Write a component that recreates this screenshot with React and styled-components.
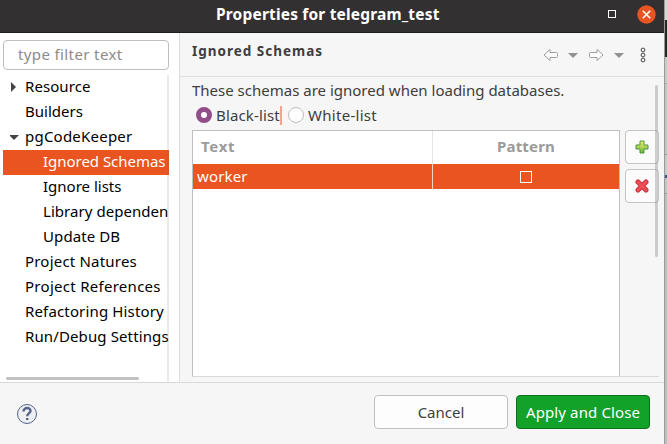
import React from "react";
import styled, { createGlobalStyle, css } from "styled-components";

const Global = createGlobalStyle`
  * { box-sizing: border-box; }
  body { margin: 0; overflow: hidden; background: #c9c9c9; font: 15px/25px "Noto Sans", "Open Sans", sans-serif; }
  button, input { font: inherit; margin: 0; padding: 0; }
`;
const Screen = styled.div`
  width: 667px; height: 444px; display: flex; overflow: hidden;
`;
const Dialog = styled.section`
  width: 664px; height: 444px; flex: none; display: flex; flex-direction: column;
  background: #f6f6f6; color: #3d3d3d;
`;
const Fit = styled.span`
  white-space: pre; letter-spacing: ${(p) => p.$ls || 0}px;
`;
const TitleBar = styled.header`
  height: 33px; flex: none; background: #323030; border-bottom: 1px solid #1d1d1d; color: #fff;
  display: flex; align-items: center; padding: 0 8px 4px 216px; font-weight: 700; font-size: 15.5px;
`;
const WindowButtons = styled.div`
  margin-left: auto; display: flex; align-items: center; gap: 21px;
`;
const Body = styled.div`
  height: 350px; flex: none; display: flex; border-bottom: 1px solid #d8d8d8;
`;
const Sidebar = styled.aside`
  width: 180px; flex: none; background: #fff; border-right: 1px solid #dedede; padding: 7px 10px 0 3px;
`;
const Filter = styled.div`
  height: 30px; border: 1px solid #bdbdbd; border-radius: 4px; background: #fff; color: #8b8b8b;
  padding: 0 0 0 14px; line-height: 26px; margin-bottom: 5px;
`;
const Tree = styled.div`
  height: 307px; overflow: hidden; color: #000; position: relative;
  background: linear-gradient(#eaeaea, #eaeaea) right / 2px 100% no-repeat;
`;
const TreeRow = styled.div`
  height: 25px; line-height: 22px; display: flex; align-items: center;
  padding: 0 0 3px ${(p) => (p.$child ? 40 : 7)}px;
  ${(p) => p.$selected && css`background: linear-gradient(90deg, #e95420 164px, #dc5628 164px); color: #fff;`}
`;
const Twisty = styled.span`
  width: 15px; height: 22px; padding-top: 2px; flex: none; display: flex; align-items: center;
`;
const HScroll = styled.div`
  position: absolute; left: 3px; bottom: 2px; width: 133px; height: 3px; border-radius: 2px; background: #c2c2c2;
`;
const Main = styled.main`
  flex: 1; min-width: 0; display: flex; flex-direction: column;
`;
const PageHead = styled.div`
  height: 44px; flex: none; border-bottom: 1px solid #dedede; display: flex; align-items: flex-start;
  padding: 6px 18px 0 12px; font-size: 13.5px; font-weight: 700;
`;
const Tools = styled.div`
  margin-left: auto; height: 32px; display: flex; align-items: center;
`;
const Content = styled.div`
  flex: 1; padding: 1px 5px 0 12px; position: relative;
`;
const VScroll = styled.div`
  position: absolute; left: 475px; top: 8px; width: 3px; height: 172px; border-radius: 2px; background: rgba(120,120,120,.34);
`;
const Radios = styled.div`
  height: 25px; display: flex; align-items: center; padding: 0 0 1px 4px;
`;
const Radio = styled.span`
  width: 16px; height: 16px; border-radius: 50%; flex: none; margin-right: 4px;
  ${(p) => p.$on
    ? css`background: #fff; border: 5.5px solid #924d8b;`
    : css`background: #fff; border: 1px solid #bdbdbd;`}
`;
const Focus = styled.span`
  width: 2px; height: 19px; background: #f2a58c; margin: 0 6px 0 0;
`;
const Split = styled.div`
  display: flex; gap: 5px; margin-top: 2px; height: 247px; border-bottom: 1px solid #dadada;
`;
const Table = styled.div`
  width: 428px; height: 247px; background: #fff; border: 1px solid #bfbfbf; border-bottom-color: #dadada;
`;
const Row = styled.div`
  display: grid; grid-template-columns: 239px 1fr; height: ${(p) => (p.$head ? 33 : 25)}px;
  ${(p) => (p.$head ? css`color: #9b9b9b; font-weight: 700;` : css`background: #e95420; color: #fff;`)}
`;
const Cell = styled.div`
  display: flex; align-items: center; padding: 0 0 ${(p) => (p.$head ? 2 : 1)}px ${(p) => p.$pl || 0}px;
  justify-content: ${(p) => (p.$center ? "center" : "flex-start")};
  border-left: ${(p) => (p.$center ? "1px" : "0")} solid ${(p) => (p.$head ? "#e3e3e3" : "#fbd3c4")};
`;
const CheckBox = styled.span`
  width: 12px; height: 12px; border: 1px solid #fff; margin-right: 1px;
`;
const SideButtons = styled.div`
  display: flex; flex-direction: column; gap: 5px;
`;
const SquareButton = styled.button`
  width: 34px; height: 34px; border: 1px solid #c4c4c4; border-radius: 4px; background: #fbfbfb;
  display: flex; align-items: center; justify-content: center;
`;
const Footer = styled.footer`
  flex: 1; display: flex; align-items: center; padding: 0 14px 0 16px; gap: 8px;
`;
const Action = styled.button`
  width: 134px; height: 34px; margin-bottom: 4px; border-radius: 4px; line-height: 28px;
  border: 1px solid ${(p) => (p.$primary ? "#0b7019" : "#bfbfbf")};
  background: ${(p) => (p.$primary ? "#12a129" : "#fdfdfd")};
  color: ${(p) => (p.$primary ? "#fff" : "#3d3d3d")};
`;
const Label = styled(Fit)`
  line-height: 24px;
`;
const Spacer = styled.div`flex: 1;`;
const Backdrop = styled.div`
  width: 3px; border-left: 1px solid #9a9a9a;
  background: linear-gradient(#d8d8d8 0 20px, #282828 20px 57px, #c9c9c9 57px 83px, #aaa 83px 84px, #c4c4c4 84px 154px, #999 154px 155px, #c9c9c9 155px 175px, #3b5584 175px 178px, #c4c4c4 178px 193px, #999 193px 194px, #bebebe 194px);
`;

const Arrow = ({ right }) => (
  <svg width="16" height="14" viewBox="0 0 16 14" fill="#fbfbfb" stroke="#a0a0a0" strokeLinejoin="round">
    <path transform={right ? "translate(15 0) scale(-1 1)" : undefined} d="M1 7 L7 1.5 V4.5 H13.5 Q14.5 4.5 14.5 5.5 V8.5 Q14.5 9.5 13.5 9.5 H7 V12.5 Z" />
  </svg>
);
const Down = styled.i`
  border: 5px solid transparent; border-top-color: #929292; border-bottom: 0; margin: 0 ${(p) => p.$mr}px 0 9px;
`;

const rows = [
  ["Resource", 0.08, "closed"], ["Builders", 0], ["pgCodeKeeper", 0.22, "open"],
  ["Ignored Schemas", -0.03, null, true, true], ["Ignore lists", 0, null, true], ["Library dependen", 0.05, null, true],
  ["Update DB", 0.1, null, true], ["Project Natures", 0.2], ["Project References", 0.28], ["Refactoring History", 0.15], ["Run/Debug Settings", 0.12],
];

export default function App() {
  return (
    <Screen>
      <Global />
      <Dialog>
        <TitleBar>
          <Fit $ls={0.18}>Properties for telegram_test</Fit>
          <WindowButtons>
            <svg width="8" height="8"><rect x=".5" y=".5" width="7" height="7" fill="none" stroke="#fff" /></svg>
            <svg width="19" height="19"><circle cx="9.5" cy="9.5" r="9.2" fill="#e95420" /><path d="M5.8 5.8 L13.2 13.2 M13.2 5.8 L5.8 13.2" stroke="#fff" strokeWidth="1.6" /></svg>
          </WindowButtons>
        </TitleBar>
        <Body>
          <Sidebar>
            <Filter><Fit $ls={0.38}>type filter text</Fit></Filter>
            <Tree>
              {rows.map(([text, ls, mark, child, selected]) => (
                <TreeRow key={text} $child={child} $selected={selected}>
                  {!child && (
                    <Twisty>
                      {mark === "closed" && <svg width="10" height="10"><path d="M4 0 L9 5 L4 10 Z" fill="#444" transform="translate(-3 0)" /></svg>}
                      {mark === "open" && <svg width="10" height="8"><path d="M-1 2 H9 L4 7 Z" fill="#444" /></svg>}
                    </Twisty>
                  )}
                  <Fit $ls={ls}>{text}</Fit>
                </TreeRow>
              ))}
              <HScroll />
            </Tree>
          </Sidebar>
          <Main>
            <PageHead>
              <Fit $ls={1}>Ignored Schemas</Fit>
              <Tools>
                <Arrow /><Down $mr={11} /><Arrow right /><Down $mr={16} />
                <svg width="6" height="16" fill="none" stroke="#444"><circle cx="3" cy="3" r="1.9" /><circle cx="3" cy="8" r="1.9" /><circle cx="3" cy="13" r="1.9" /></svg>
              </Tools>
            </PageHead>
            <Content>
              <Fit>These schemas are ignored when loading databases.</Fit>
              <Radios>
                <Radio $on /><Label $ls={0.15}>Black-list</Label><Focus /><Radio /><Label $ls={0.3}>White-list</Label>
              </Radios>
              <Split>
                <Table>
                  <Row $head>
                    <Cell $head $pl={8}><Fit $ls={0.7}>Text</Fit></Cell>
                    <Cell $head $center><Fit $ls={0.15}>Pattern</Fit></Cell>
                  </Row>
                  <Row>
                    <Cell $pl={4}><Fit $ls={0.15}>worker</Fit></Cell>
                    <Cell $center><CheckBox /></Cell>
                  </Row>
                </Table>
                <SideButtons>
                  <SquareButton aria-label="Add">
                    <svg width="14" height="14"><defs><linearGradient id="g" x2="0" y2="1"><stop stopColor="#f2ef70" /><stop offset="1" stopColor="#69b83c" /></linearGradient></defs><path d="M5 1 H9 V5 H13 V9 H9 V13 H5 V9 H1 V5 H5 Z" fill="url(#g)" stroke="#4d943f" /></svg>
                  </SquareButton>
                  <SquareButton aria-label="Remove">
                    <svg width="14" height="14"><path d="M3 3 L11 11 M11 3 L3 11" stroke="#cd2f3c" strokeWidth="5" strokeLinecap="round" /><path d="M3 3 L11 11 M11 3 L3 11" stroke="#ee5055" strokeWidth="3" strokeLinecap="round" /></svg>
                  </SquareButton>
                </SideButtons>
              </Split>
              <VScroll />
            </Content>
          </Main>
        </Body>
        <Footer>
          <svg width="22" height="22" viewBox="0 0 22 22" fill="none" stroke="#54658c"><circle cx="11" cy="11" r="9.5" fill="#eeeff1" /><path d="M7.5 8.5 C7.5 3.8 15 4.1 14.5 8.2 C14.2 10.4 11.2 10.6 11.2 13.2 M11.2 15 V17" strokeWidth="2.4" /></svg>
          <Spacer />
          <Action><Fit>Cancel</Fit></Action>
          <Action $primary><Fit $ls={0.12}>Apply and Close</Fit></Action>
        </Footer>
      </Dialog>
      <Backdrop />
    </Screen>
  );
}
